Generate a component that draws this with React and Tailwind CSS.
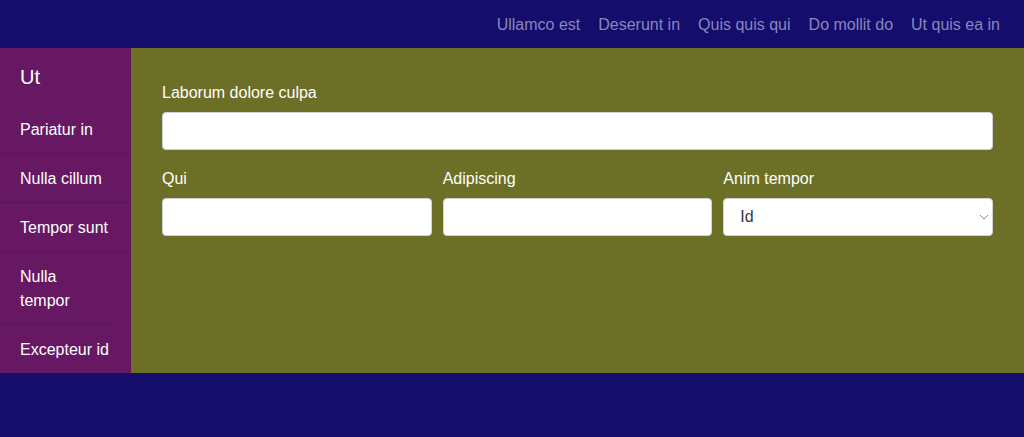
import React from 'react';

const navLinks = ['Ullamco est', 'Deserunt in', 'Quis quis qui', 'Do mollit do', 'Ut quis ea in'];
const sideLinks = ['Pariatur in', 'Nulla cillum', 'Tempor sunt', 'Nulla tempor', 'Excepteur id'];

const App = () => {
  return (
    <div className="min-h-[437px] bg-[#140d6b] font-['Liberation_Sans',Arial,sans-serif] text-base">
      {/* Header */}
      <header className="h-12 flex items-center justify-end pr-6 pt-px gap-[18px]">
        {navLinks.map((l) => (
          <a key={l} className="text-[#8a86bd] leading-6">{l}</a>
        ))}
      </header>

      <div className="flex">
        {/* Sidebar */}
        <aside className="w-[131px] shrink-0 bg-[#671862] text-white">
          <div className="px-5 pt-[15px] pb-[14px] text-xl leading-7">Ut</div>
          {sideLinks.map((l, i) => (
            <div
              key={l}
              className={`px-5 pt-[13px] pb-[11px] leading-6 ${i < sideLinks.length - 1 ? 'border-b border-[#5a1456]' : ''} ${l === 'Nulla tempor' ? 'w-[110px]' : ''}`}
            >
              {l}
            </div>
          ))}
        </aside>

        {/* Main */}
        <main className="flex-1 bg-[#6c7026] px-[31px] pt-8 text-white">
          <label className="block leading-6 pt-px mb-[7px]">Laborum dolore culpa</label>
          <input type="text" className="block w-full h-[38px] bg-white rounded border border-[#ced4da]" />

          <div className="grid grid-cols-3 gap-[11px] mt-4">
            <div>
              <label className="block leading-6 pt-px mb-[7px]">Qui</label>
              <input type="text" className="block w-full h-[38px] bg-white rounded border border-[#ced4da]" />
            </div>
            <div>
              <label className="block leading-6 pt-px mb-[7px]">Adipiscing</label>
              <input type="text" className="block w-full h-[38px] bg-white rounded border border-[#ced4da]" />
            </div>
            <div>
              <label className="block leading-6 pt-px mb-[7px]">Anim tempor</label>
              <div className="relative">
                <select className="block w-full h-[38px] appearance-none bg-white rounded border border-[#ced4da] pl-4 text-[#343a40]">
                  <option>Id</option>
                </select>
                <svg className="absolute right-[4px] top-1/2 -translate-y-1/2 pointer-events-none" width="10" height="6" viewBox="0 0 10 6" fill="none">
                  <path d="M1 1l4 4 4-4" stroke="#8a8a8a" strokeWidth="1" />
                </svg>
              </div>
            </div>
          </div>
        </main>
      </div>
    </div>
  );
};

export default App;
